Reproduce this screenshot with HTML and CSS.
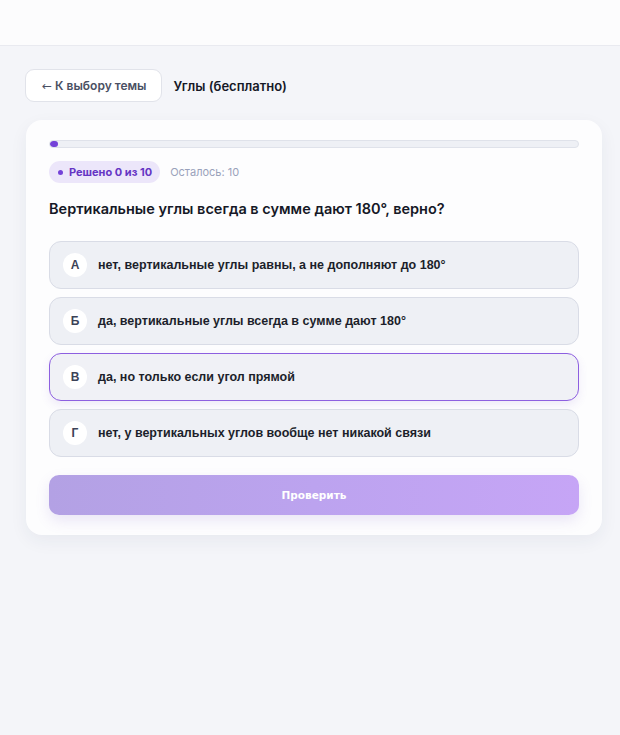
FILE: index.html
```html
<!DOCTYPE html>
<html lang="ru">
<head>
<meta charset="utf-8">
<title>Углы</title>
<link rel="stylesheet" href="styles.css">
</head>
<body>
<header class="topbar"></header>
<main class="page">
  <div class="nav">
    <button class="back"><span class="arrow">←</span> К выбору темы</button>
    <span class="topic">Углы (бесплатно)</span>
  </div>
  <section class="card">
    <div class="progress"><div class="progress-fill"></div></div>
    <div class="stats">
      <span class="pill"><span class="dot"></span>Решено 0 из 10</span>
      <span class="left">Осталось: 10</span>
    </div>
    <h2 class="question">Вертикальные углы всегда в сумме дают 180°, верно?</h2>
    <div class="options">
      <div class="option"><span class="letter">А</span><span class="otext">нет, вертикальные углы равны, а не дополняют до 180°</span></div>
      <div class="option"><span class="letter">Б</span><span class="otext">да, вертикальные углы всегда в сумме дают 180°</span></div>
      <div class="option option-active"><span class="letter">В</span><span class="otext">да, но только если угол прямой</span></div>
      <div class="option"><span class="letter">Г</span><span class="otext">нет, у вертикальных углов вообще нет никакой связи</span></div>
    </div>
    <button class="check">Проверить</button>
  </section>
</main>
</body>
</html>
```
FILE: styles.css
```css
* { box-sizing: border-box; }
html, body { margin: 0; padding: 0; }
body {
  background: #f4f5f9;
  font-family: Inter, "Liberation Sans", sans-serif;
  color: #151826;
  min-height: 735px;
}
.topbar {
  height: 46px;
  background: #fcfcfd;
  border-bottom: 1px solid #e9eaf0;
}
.page {
  padding: 23px 18px 0 25px;
}
.nav {
  display: flex;
  align-items: center;
  gap: 11px;
}
.back {
  height: 33px;
  padding: 0 15px 0 16px;
  background: #ffffff;
  border: 1px solid #e1e3ea;
  border-radius: 9px;
  font-family: Inter, sans-serif;
  font-weight: 600;
  font-size: 12px;
  color: #4a5063;
  cursor: pointer;
}
.arrow {
  font-family: "DejaVu Sans", sans-serif;
  font-weight: 400;
  font-size: 12px;
}
.topic {
  font-family: Inter, sans-serif;
  font-weight: 600;
  font-size: 13px;
  color: #151826;
}
.card {
  margin-top: 18px;
  margin-left: 1px;
  width: 576px;
  background: #fdfdfe;
  border-radius: 16px;
  padding: 20px 23px 20px 23px;
  box-shadow: 0 6px 18px rgba(40, 50, 90, 0.06);
}
.progress {
  height: 8px;
  background: #eef0f5;
  border: 1px solid #dfe2ea;
  border-radius: 4px;
  overflow: hidden;
}
.progress-fill {
  width: 8px;
  height: 100%;
  background: #7442d8;
  border-radius: 4px;
}
.stats {
  margin-top: 13px;
  display: flex;
  align-items: center;
  gap: 10px;
}
.pill {
  display: inline-flex;
  align-items: center;
  gap: 6px;
  height: 22px;
  padding: 0 8px 0 9px;
  background: #ece6fa;
  border-radius: 11px;
  font-size: 11px;
  font-weight: 700;
  color: #6535c4;
}
.dot {
  width: 5px;
  height: 5px;
  border-radius: 50%;
  background: #7442d8;
}
.left {
  font-size: 11px;
  color: #9aa2bb;
}
.question {
  margin: 17px 0 23px;
  font-size: 14.5px;
  line-height: 18px;
  font-weight: 600;
  color: #151826;
}
.options {
  display: flex;
  flex-direction: column;
  gap: 8px;
}
.option {
  display: flex;
  align-items: center;
  gap: 11px;
  height: 48px;
  padding: 0 13px;
  background: #eef0f5;
  border: 1px solid #d9dce6;
  border-radius: 12px;
}
.option-active {
  border-color: #8d5fe0;
  background: #f0f1f6;
  box-shadow: 0 4px 10px rgba(110, 70, 200, 0.1);
}
.letter {
  width: 24px;
  height: 24px;
  border-radius: 50%;
  background: #ffffff;
  display: flex;
  align-items: center;
  justify-content: center;
  font-family: "Liberation Sans", sans-serif;
  font-weight: 700;
  font-size: 12px;
  color: #3c4257;
}
.otext {
  font-family: "Liberation Sans", Arial, sans-serif;
  font-weight: 700;
  font-size: 12.5px;
  color: #1c1f2b;
}
.check {
  margin-top: 18px;
  width: 100%;
  height: 40px;
  border: 0;
  border-radius: 10px;
  background: linear-gradient(90deg, #b3a1e4 0%, #bca3ef 50%, #c6a5f6 100%);
  box-shadow: 0 6px 14px rgba(130, 100, 200, 0.15);
  font-family: "DejaVu Sans", sans-serif;
  font-weight: 700;
  font-size: 10.5px;
  color: #ffffff;
  cursor: pointer;
}
```
